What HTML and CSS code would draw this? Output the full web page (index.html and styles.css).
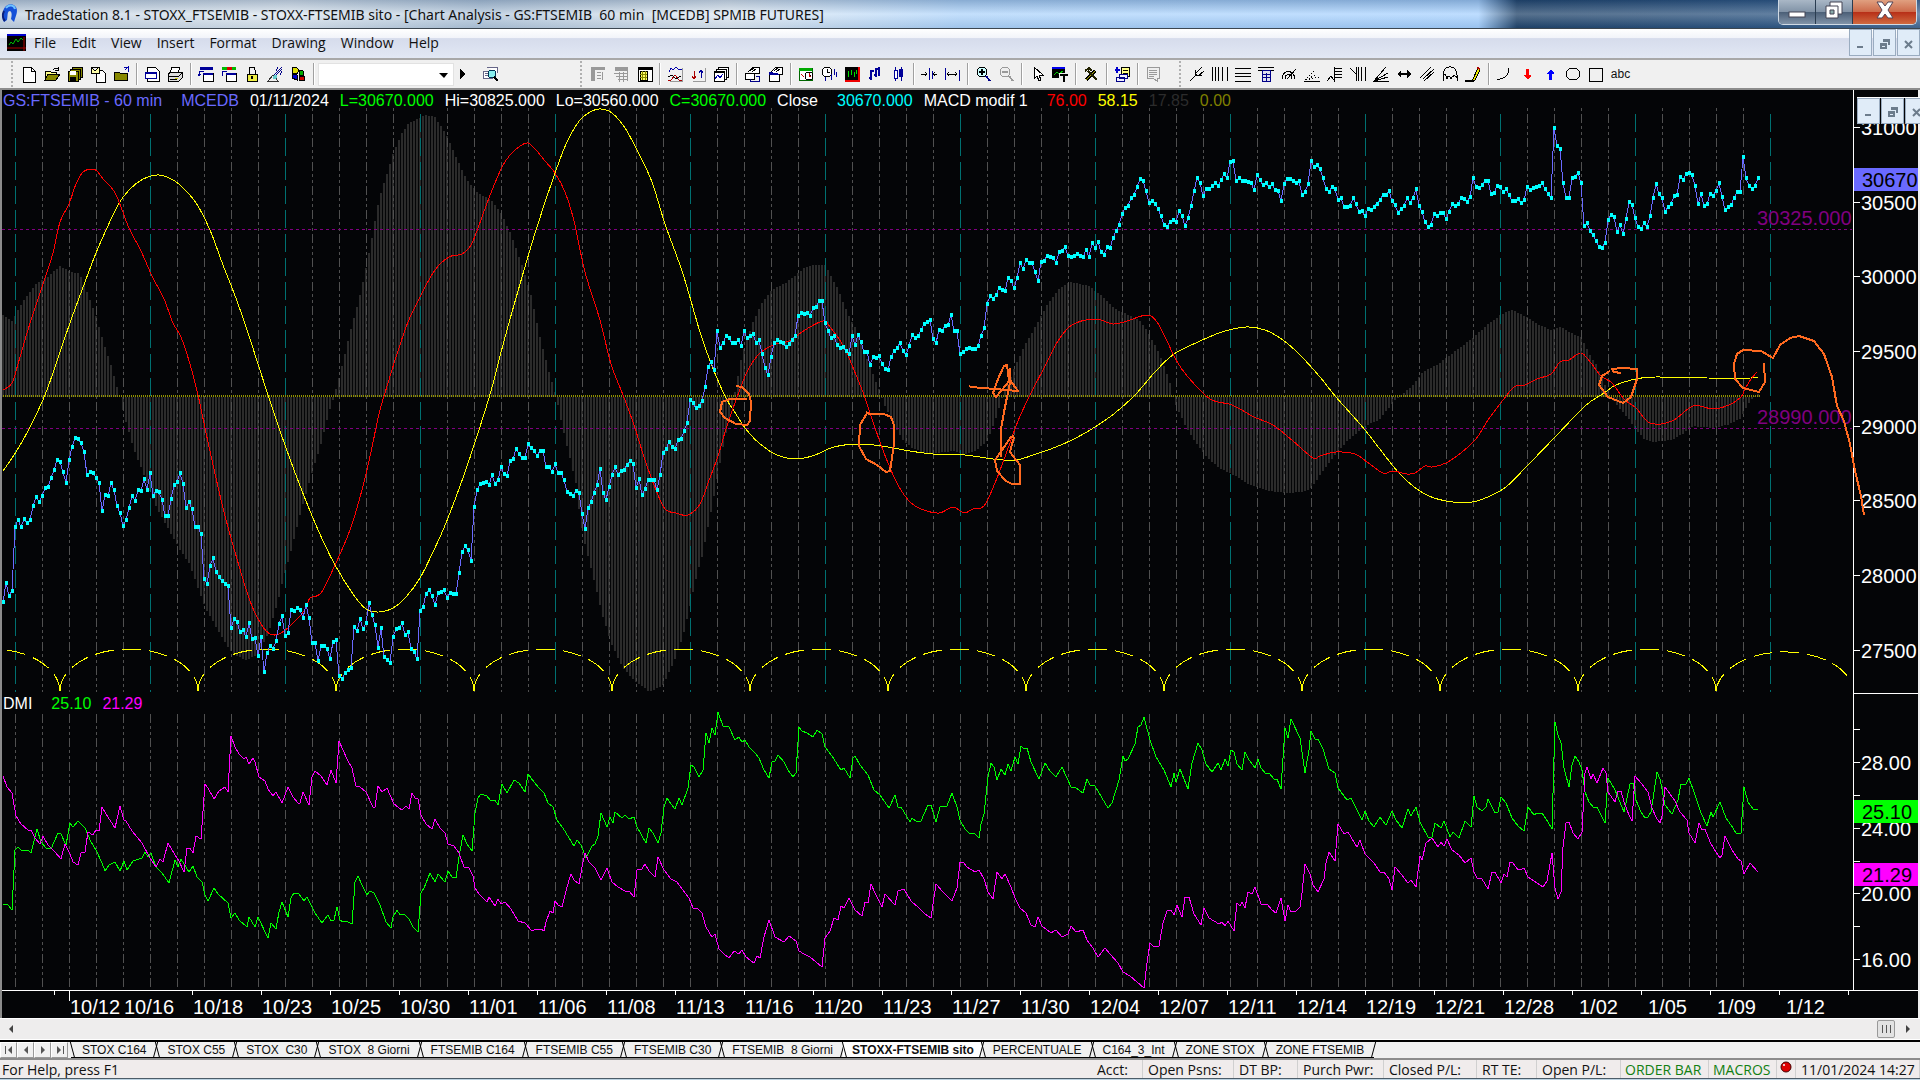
FILE: index.html
```html
<!DOCTYPE html>
<html lang="en">
<head>
    <meta charset="UTF-8">
    <meta name="viewport" content="width=device-width, initial-scale=1.0">
    <title>TradeStation 8.1 - STOXX_FTSEMIB</title>
    <link rel="stylesheet" href="styles.css">
</head>
<body>
<!-- Title bar -->
<header class="titlebar">
    <svg class="logo" width="20" height="24" viewBox="0 0 20 24"><path d="M3 10C4 3 11 0 15 4c4 4 1 9-1 16l-3-3c1-4 1-7-1-8-3 0-2 4-3 9l-3 2c-2-3-2-6-1-10z" fill="#1450d8"/><path d="M6 6c3-4 8-3 9 1" fill="none" stroke="#6fc3ff" stroke-width="2"/><path d="M4 9c-2 4-1 8 1 10" fill="none" stroke="#0a1f7a" stroke-width="2"/></svg>
    <h1>TradeStation 8.1 - STOXX_FTSEMIB - STOXX-FTSEMIB sito - [Chart Analysis - GS:FTSEMIB&nbsp; 60 min&nbsp; [MCEDB] SPMIB FUTURES]</h1>
    <div class="window-buttons">
        <button class="win" aria-label="Minimize"><svg width="20" height="20"><rect x="2" y="12" width="16" height="5" fill="#fff" stroke="#445" /></svg></button>
        <button class="win" aria-label="Restore"><svg width="22" height="20"><path d="M7 2h12v12H7z" fill="#fff" stroke="#445"/><path d="M3 6h12v12H3z" fill="#fff" stroke="#445"/><path d="M7 10h4v4H7z" fill="#8aa" stroke="#445"/></svg></button>
        <button class="win close" aria-label="Close"><svg width="22" height="20"><path d="M3 2h5l3 4 3-4h5l-5 8 5 8h-5l-3-4-3 4H3l5-8z" fill="#fff" stroke="#545"/></svg></button>
    </div>
</header>

<!-- Menu -->
<nav class="menubar">
    <svg class="chart-icon" width="19" height="17"><path d="M0 0h19v17H0z" fill="#000"/><path d="M0 0h19v2H0z" fill="#00c"/><path d="M2 11l2-3 2 2 3-5 2 3 3-4 2 2" stroke="#0b0" fill="none"/><path d="M0 14h19M17 3v14" stroke="#a00"/></svg>
    <button>File</button>
    <button>Edit</button>
    <button>View</button>
    <button>Insert</button>
    <button>Format</button>
    <button>Drawing</button>
    <button>Window</button>
    <button>Help</button>
    <div class="mdi-buttons">
        <button aria-label="Minimize chart"><svg width="12" height="12"><path d="M2 8h6v2H2z"/></svg></button>
        <button aria-label="Restore chart"><svg width="12" height="12"><path d="M4 1h7v6H9V4H4zM1 5h7v6H1zM3 8v1h3V8z" fill-rule="evenodd"/></svg></button>
        <button aria-label="Close chart"><svg width="12" height="12"><path d="M2 3l7 7M9 3l-7 7" class="cross"/></svg></button>
    </div>
</nav>

<!-- Toolbar -->
<div class="toolbar">
    <div class="group main">
        <button aria-label="New"><svg><path d="M2 1h8l4 4v11H2z" fill="#fff" stroke="#000"/><path d="M10 1v4h4" fill="none" stroke="#000"/></svg></button>
        <button aria-label="Open"><svg><path d="M1 14V5h5l1 1h5v3" fill="#ff8" stroke="#000"/><path d="M1 14l3-6h12l-4 6z" fill="#880" stroke="#000"/><path d="M9 4c2-3 4-2 5-1m0-2v3h-3" fill="none" stroke="#000"/></svg></button>
        <button aria-label="Save all"><svg><path d="M5 1h10v10H5z" fill="#880" stroke="#000"/><path d="M3 3h10v10H3z" fill="#880" stroke="#000"/><path d="M1 5h10v10H1z" fill="#880" stroke="#000"/><path d="M3 5h6v4H3z" fill="#fff"/><path d="M3 11h6v4H3z"/></svg></button>
        <button aria-label="Mail document"><svg><path d="M6 4h6l3 3v9H6z" fill="#fff" stroke="#000"/><path d="M1 1h8v6H1zl4 4 4-4" fill="#ffa" stroke="#000"/></svg></button>
        <button aria-label="Close folder"><svg><path d="M1 14V6h5l1 1h7v7z" fill="#880" stroke="#000"/><path d="M15 6V1l-3 3m3-3l-4 1" fill="none" stroke="#00a"/></svg></button>
        <i class="sep"></i>
        <button aria-label="Print preview"><svg><path d="M3 1h8l4 4v10H3z" fill="#fff" stroke="#000"/><path d="M1 6h11v6H1z" fill="#fff" stroke="#009"/><path d="M1 6h11v2H1z" fill="#009"/></svg></button>
        <button aria-label="Print"><svg><path d="M5 1h8l-2 6H3z" fill="#fff" stroke="#000"/><path d="M1 8l3-2h11v6l-3 3H1z" fill="#ddd" stroke="#000"/><path d="M1 10h11l3-3M3 13h7" fill="none" stroke="#000"/><path d="M8 12h3v1H8z" fill="#cc0"/></svg></button>
        <i class="sep"></i>
        <button aria-label="Insert symbol"><svg><path d="M2 1h13v3H2z" fill="#009"/><path d="M5 7h10v8H5z" fill="#fff" stroke="#000"/><path d="M5 7h10v2H5z" fill="#009"/><path d="M6 5H1v5m-1-2l1 2 2-2" fill="none" stroke="#009"/></svg></button>
        <button aria-label="Insert strategy"><svg><path d="M1 1h5v3H1z" fill="#0b0"/><path d="M6 1h5v3H6z" fill="#d00"/><path d="M11 1h4v3h-4z" fill="#0b0"/><path d="M5 7h10v8H5z" fill="#fff" stroke="#000"/><path d="M5 7h10v2H5z" fill="#009"/><path d="M6 5H1v5" fill="none" stroke="#009"/></svg></button>
        <button aria-label="Lock"><svg><path d="M5 8V4c0-4 6-4 6 0v4" fill="none" stroke="#000"/><path d="M3 8h10v7H3z" fill="#ee4" stroke="#000"/><path d="M7 10h2v3H7z"/></svg></button>
        <button aria-label="Satellite"><svg><path d="M1 15l5-6 5 6zM7 8l3 4" fill="#eee" stroke="#333"/><path d="M7 9l8-8M9 9l6-6M9 5l2-4M13 9l2-4" stroke="#008" fill="none"/><circle cx="8" cy="11" r="2" fill="#6cc"/></svg></button>
        <button aria-label="EasyLanguage"><svg><path d="M2 2l4-1 3 3-2 4-5-1z" fill="#dd0" stroke="#000"/><path d="M9 4l4 1 1 4-4 1z" fill="#0a0" stroke="#000"/><path d="M2 8l5 1v5l-5-2z" fill="#00c" stroke="#000"/><path d="M9 10l6 1-1 4-5-1z" fill="#c00" stroke="#000"/></svg></button>
        <i class="sep"></i>
        <label class="symbol">
            <select aria-label="Symbol"><option></option></select>
            <svg class="drop"><path d="M1 1h9l-4 5z"/></svg>
        </label>
        <button class="go" aria-label="Go"><svg><path d="M6 3v10l5-5z"/></svg></button>
        <button class="lookup" aria-label="Symbol lookup"><svg><path d="M1 5h9v7H1zM5 1h10v6" fill="#fff" stroke="#668"/><path d="M3 7h4M3 9h4" stroke="#668"/><circle cx="10" cy="8" r="4" fill="#8ee" stroke="#035"/><path d="M12 11l4 4" stroke="#000" stroke-width="2"/></svg></button>
    </div>
    <div class="group">
        <button aria-label="Account" disabled><svg><path d="M1 1h14v3H1zM1 4h4v11H1z" fill="#999"/><path d="M7 6h4M7 9h4M7 12h4M12 6v8" stroke="#999"/></svg></button>
        <button aria-label="Positions" disabled><svg><path d="M2 1h13v4H2z" fill="#999"/><path d="M1 7h14M3 10h12M5 13h10M6 6v10M10 6v10M14 5v10" stroke="#999"/></svg></button>
        <button aria-label="Data window"><svg><path d="M2 1h14v14H2z" fill="#fff" stroke="#000"/><path d="M2 1h14v3H2z" fill="#000"/><path d="M4 5h7v9H4z" fill="#ff6" stroke="#000"/><path d="M6 5v9M9 5v9M4 8h7M4 11h7" stroke="#880"/></svg></button>
        <i class="sep"></i>
        <button aria-label="Indicator"><svg><path d="M2 6l2-4 2 2 3-3 3 3 3-1" fill="none" stroke="#00a"/><path d="M1 14h3l4-5 4 5h3" fill="none" stroke="#a00"/><path d="M1 11l4-2 4 4 5-3" fill="none" stroke="#000"/><path d="M15 2v13H3" fill="none" stroke="#999"/></svg></button>
        <button aria-label="Strategy"><svg><path d="M4 5v8m-2-3l2 3 2-3" fill="none" stroke="#a00"/><path d="M11 12V4m-2 3l2-3 2 3" fill="none" stroke="#009"/><path d="M15 2v13H3" fill="none" stroke="#999"/></svg></button>
        <button aria-label="Analysis windows"><svg><path d="M5 1h10v10H5z" fill="#fff" stroke="#000"/><path d="M3 3h10v10H3z" fill="#fff" stroke="#000"/><path d="M1 5h10v10H1z" fill="#fff" stroke="#000"/><path d="M1 5h10v2H1z"/><path d="M2 13l3-4 2 3 3-4" fill="none" stroke="#00a"/></svg></button>
        <i class="sep"></i>
        <button aria-label="Format symbol"><svg><path d="M4 6l5-5h6v6h-4" fill="#fff" stroke="#000"/><path d="M6 5l4-3M8 6l4-3" stroke="#000"/><path d="M1 7h9v6H1z" fill="#fff" stroke="#000"/><path d="M12 10h3v5H6v-2" fill="none" stroke="#008"/></svg></button>
        <button aria-label="Format window"><svg><path d="M2 6h10v9H2z" fill="#fff" stroke="#000"/><path d="M2 6h10v3H2z" fill="#009"/><path d="M4 6l5-5h6v7h-2" fill="#fff" stroke="#000"/><path d="M7 5l4-3M9 6l4-3" stroke="#000"/></svg></button>
        <i class="sep"></i>
        <button aria-label="Sessions"><svg><path d="M1 2h13v12H1z" fill="#fff" stroke="#060"/><path d="M1 2h13v3H1z" fill="#0a0"/><circle cx="11" cy="10" r="4" fill="#fff" stroke="#000"/><path d="M3 8l3 3M11 7v3h2" stroke="#c00"/></svg></button>
        <button aria-label="Interval"><svg><circle cx="6" cy="6" r="5" fill="#fff" stroke="#000"/><path d="M6 3v3h3" fill="none" stroke="#000"/><path d="M4 11v4M10 8v6M13 3v6M15 6v5" stroke="#009"/></svg></button>
        <button aria-label="Chart window"><svg><path d="M1 1h15v14H1z"/><path d="M15 1v14H1" stroke="#e00" stroke-width="2" fill="none"/><path d="M4 5v6M7 4v5M10 6v5M12 4v4" stroke="#0d0"/></svg></button>
        <button aria-label="Bar chart"><svg><path d="M4 4v10M2 12h2M4 5h3M9 2v9M7 9h2M9 3h3M12 1v9" stroke="#009" stroke-width="2" fill="none"/></svg></button>
        <button aria-label="Candlestick"><svg><path d="M5 1v14M11 1v14" stroke="#009"/><path d="M4 4h3v8H4z" fill="#fff" stroke="#009"/><path d="M9 3h4v8H9z" fill="#009"/></svg></button>
        <i class="sep"></i>
        <button aria-label="Decrease spacing"><svg><path d="M8 2v12M11 5v8" stroke="#009"/><path d="M0 8h6m-2-2l2 2-2 2M16 8h-4m2-2l-2 2 2 2" fill="none" stroke="#000"/></svg></button>
        <button aria-label="Increase spacing"><svg><path d="M1 2v12M15 4v11" stroke="#009"/><path d="M3 8h10M5 6L3 8l2 2M11 6l2 2-2 2" fill="none" stroke="#000"/></svg></button>
        <i class="sep"></i>
        <button aria-label="Zoom in"><svg><circle cx="7" cy="6" r="5" fill="#cff" stroke="#000"/><path d="M7 3v6M4 6h6" stroke="#000" stroke-width="2"/><path d="M11 10l4 5" stroke="#008" stroke-width="2"/></svg></button>
        <button aria-label="Zoom out" disabled><svg><circle cx="7" cy="6" r="5" fill="#eee" stroke="#999"/><path d="M4 6h6M11 10l4 5" stroke="#999" stroke-width="2"/></svg></button>
        <i class="sep"></i>
        <button aria-label="Pointer"><svg><path d="M5 1v12l3-3 2 5 2-1-2-5h4z" fill="#fff" stroke="#000"/></svg></button>
        <button aria-label="Data tip"><svg><path d="M0 1h13v11H0z"/><path d="M0 1h13v2H0z" fill="#00e"/><path d="M2 9l3-3 2 2 4-3" stroke="#0c0" fill="none"/><path d="M7 7h10v10H7z" fill="#f0f0f0"/><path d="M8 9h8M12 9v7" stroke="#000" stroke-width="2"/></svg></button>
        <i class="sep"></i>
        <button aria-label="Tools"><svg><path d="M3 14L12 5" stroke="#000" stroke-width="3"/><path d="M3 14L12 5" stroke="#aa0"/><path d="M2 5l4-3 3 3M5 5l9 9" stroke="#220" stroke-width="2" fill="none"/></svg></button>
        <i class="sep"></i>
        <button aria-label="Add sheet"><svg><path d="M7 1h8v9H7z" fill="#ff8" stroke="#000"/><path d="M9 4h5M9 7h5" stroke="#000"/><path d="M1 4h5M3 1v6" stroke="#00c" stroke-width="2"/><path d="M5 8h8v4H5zM2 11h8v4H2z" fill="#eef" stroke="#008"/></svg></button>
        <i class="sep"></i>
        <button aria-label="Notes" disabled><svg><path d="M2 1h12v11h-2v3l-4-3H2z" fill="#eee" stroke="#999"/><path d="M4 4h8M4 6h8M4 8h8M4 10h5" stroke="#999"/></svg></button>
    </div>
    <div class="group drawing">
        <button aria-label="Andrews pitchfork"><svg><path d="M1 15L8 8M7 4l-1 4 3 2 4-1M6 8l7-7M9 10l6-5" fill="none" stroke="#000"/></svg></button>
        <button aria-label="Fibonacci time"><svg><path d="M0 1v14M3 1v14M6 1v14M10 1v14M15 1v14" stroke="#000"/></svg></button>
        <button aria-label="Horizontal lines"><svg><path d="M0 2h16M0 7h16M0 10h16M0 15h16" stroke="#000"/></svg></button>
        <button aria-label="Price retracement"><svg><path d="M0 1h16M0 4h16" stroke="#000"/><path d="M4 4h8v11H4z" fill="#dde" stroke="#008"/><path d="M4 8h8M4 11h8M8 7v8" stroke="#008"/></svg></button>
        <button aria-label="Speed arcs"><svg><path d="M1 13c0-10 12-10 13 0M4 13c0-6 7-6 7 0M6 13l9-10" fill="none" stroke="#000"/></svg></button>
        <button aria-label="Speed fan"><svg><path d="M0 15h16" stroke="#000"/><path d="M1 14L14 1M2 14L15 7M2 14l13-3" stroke="#000" stroke-dasharray="1 2"/></svg></button>
        <button aria-label="Price extension"><svg><path d="M0 15l4-5 3 4V1M8 2h7M8 5h7M8 8h7M8 11h7" fill="none" stroke="#000"/></svg></button>
        <button aria-label="Time extension"><svg><path d="M0 2l6 6V1M8 1v14M11 1v14M15 1v14M6 8v7" fill="none" stroke="#000"/></svg></button>
        <button aria-label="Gann fan"><svg><path d="M0 15h16M1 15L13 1M1 15L15 7M1 15l14-4" stroke="#000"/></svg></button>
        <button aria-label="Time line"><svg><path d="M2 8h12" stroke="#000" stroke-width="2"/><path d="M5 4v8L1 8zM11 4v8l4-4z"/></svg></button>
        <button aria-label="Regression channel"><svg><path d="M1 12L12 1M4 13L15 3M5 15L15 6" stroke="#000"/></svg></button>
        <button aria-label="Cycle lines"><svg><path d="M1 15V9c0-11 14-11 14 0v6M1 10c2-3 4 0 4 3 0-4 3-4 4 0 1-4 5-4 6-1" fill="none" stroke="#000"/></svg></button>
        <button aria-label="Trend line"><svg><path d="M0 15h9" stroke="#000" stroke-width="2"/><path d="M8 13l5-11 2 2-5 10-3 1z" fill="#ee0" stroke="#000"/><path d="M12 1l3 1v2l-3-1z" fill="#a00"/></svg></button>
        <i class="sep"></i>
        <button aria-label="Arc"><svg><path d="M1 13c7 1 12-4 12-11" fill="none" stroke="#000"/></svg></button>
        <button aria-label="Down arrow"><svg><path d="M7 3h3v6h2v1l-3 4-4-4V9h2z" fill="#f00"/></svg></button>
        <button aria-label="Up arrow"><svg><path d="M7 14h3V8h2V7L9 3 5 7v1h2z" fill="#00f"/></svg></button>
        <button aria-label="Ellipse"><svg><ellipse cx="8" cy="8" rx="7" ry="6" fill="none" stroke="#000"/></svg></button>
        <button aria-label="Rectangle"><svg><path d="M1 2h13v13H1z" fill="none" stroke="#000"/></svg></button>
        <button class="abc">abc</button>
    </div>
</div>

<!-- Chart -->
<main class="chart">
    <div class="plot-area">
        <svg id="plot" class="plot" viewBox="2 90 1851 900" preserveAspectRatio="xMinYMin meet"></svg>
        <p class="legend">
            <span class="violet wide">GS:FTSEMIB - 60 min</span>
            <span class="violet">MCEDB</span>
            <span>01/11/2024</span>
            <span class="green">L=30670.000</span>
            <span>Hi=30825.000</span>
            <span>Lo=30560.000</span>
            <span class="green">C=30670.000</span>
            <span class="wide">Close</span>
            <span class="cyan">30670.000</span>
            <span class="wide">MACD modif 1</span>
            <span class="red">76.00</span>
            <span class="yellow">58.15</span>
            <span class="dark">17.85</span>
            <span class="olive">0.00</span>
        </p>
        <p class="legend dmi">
            <span class="wide">DMI</span>
            <span class="green">25.10</span>
            <span class="magenta">21.29</span>
        </p>
    </div>
    <div class="price-axis">
        <svg id="axis" viewBox="1853 90 65 900" preserveAspectRatio="xMinYMin meet"></svg>
        <div class="mdi-buttons floating">
            <button aria-label="Minimize"><svg width="12" height="12"><path d="M2 8h6v2H2z"/></svg></button>
            <button aria-label="Restore"><svg width="12" height="12"><path d="M4 1h7v6H9V4H4zM1 5h7v6H1zM3 8v1h3V8z" fill-rule="evenodd"/></svg></button>
            <button aria-label="Close"><svg width="12" height="12"><path d="M2 3l7 7M9 3l-7 7" class="cross"/></svg></button>
        </div>
    </div>
    <svg id="time" class="time-axis" viewBox="2 990 1916 28" preserveAspectRatio="xMinYMin meet"></svg>
</main>

<!-- Horizontal scrollbar -->
<div class="scrollbar">
    <button aria-label="Scroll left"><svg width="8" height="10"><path d="M5 1v8L1 5z"/></svg></button>
    <span class="track"></span>
    <span class="thumb"></span>
    <button aria-label="Scroll right"><svg width="8" height="10"><path d="M2 1v8l4-4z"/></svg></button>
</div>

<!-- Workspace tabs -->
<nav class="tabs">
    <div class="tab-arrows">
        <button aria-label="First"><svg width="10" height="8"><path d="M1 0h1v8H1zM8 0v8L4 4z"/></svg></button>
        <button aria-label="Previous"><svg width="10" height="8"><path d="M7 0v8L3 4z"/></svg></button>
        <button aria-label="Next"><svg width="10" height="8"><path d="M3 0v8l4-4z"/></svg></button>
        <button aria-label="Last"><svg width="10" height="8"><path d="M8 0h1v8H8zM2 0v8l4-4z"/></svg></button>
    </div>
    <button class="tab">STOX C164</button>
    <button class="tab">STOX C55</button>
    <button class="tab">STOX&nbsp; C30</button>
    <button class="tab">STOX&nbsp; 8 Giorni</button>
    <button class="tab">FTSEMIB C164</button>
    <button class="tab">FTSEMIB C55</button>
    <button class="tab">FTSEMIB C30</button>
    <button class="tab">FTSEMIB&nbsp; 8 Giorni</button>
    <button class="tab active">STOXX-FTSEMIB sito</button>
    <button class="tab">PERCENTUALE</button>
    <button class="tab">C164_3_Int</button>
    <button class="tab">ZONE STOX</button>
    <button class="tab">ZONE FTSEMIB</button>
</nav>

<!-- Status bar -->
<footer class="statusbar">
    <span class="help">For Help, press F1</span>
    <span>Acct:</span>
    <span>Open Psns:</span>
    <span>DT BP:</span>
    <span>Purch Pwr:</span>
    <span>Closed P/L:</span>
    <span>RT TE:</span>
    <span>Open P/L:</span>
    <span class="on">ORDER BAR</span>
    <span class="on">MACROS</span>
    <span class="ball"><svg width="14" height="14"><circle cx="7" cy="7" r="5" fill="#d00" stroke="#400"/><circle cx="5" cy="5" r="1" fill="#fff"/></svg></span>
    <span>11/01/2024 14:27</span>
</footer>
<div class="taskbar"></div>

<script src="chart.js"></script>
</body>
</html>
```

FILE: styles.css
```css
* {
    box-sizing: border-box;
}
body {
    margin: 0;
    height: 100vh;
    display: flex;
    flex-direction: column;
    overflow: hidden;
    background-color: #f0f0f0;
    color: #111;
    font-family: "Open Sans", "Noto Sans", sans-serif;
    font-size: 14px;
}
button {
    border: none;
    padding: 0;
    background: none;
    font: inherit;
    color: inherit;
}

/* Title bar */
.titlebar {
    height: 29px;
    display: flex;
    align-items: center;
    background:
        linear-gradient(rgba(20, 50, 90, 0.25), rgba(255, 255, 255, 0.25) 50%, rgba(20, 50, 90, 0.1)),
        linear-gradient(90deg, #c4d3e2, #dde7f0 15%, #b4c8dc 25%, #dfe9f2 38%, #b0d5fb 50%, #a8d2ff 77%, #1f4268 79%, #2c5480 92%, #456a94);
    border-bottom: 1px solid #3c4650;
}
.logo {
    flex: none;
    margin: 0 5px 0 0;
}
.titlebar h1 {
    flex: 1;
    margin: 0;
    font-family: "Noto Sans", sans-serif;
    font-size: 14px;
    font-weight: normal;
    white-space: nowrap;
}
.window-buttons {
    display: flex;
    align-self: flex-start;
    height: 25px;
    margin-right: 3px;
    border: 1px solid #d0dae4;
    border-top: none;
    border-radius: 0 0 5px 5px;
    overflow: hidden;
}
.win {
    width: 37px;
    border-right: 1px solid #2a3c50;
    background: linear-gradient(#a9b7c6, #8092a6 50%, #4c6078 52%, #8193a8);
}
.win.close {
    width: 63px;
    border-right: none;
    background: linear-gradient(#e0a080, #cc6a4a 50%, #b83018 52%, #d06a40);
}

/* Menu bar */
.menubar {
    height: 31px;
    display: flex;
    align-items: center;
    gap: 15px;
    padding: 0 0 2px 7px;
    background: linear-gradient(#ffffff, #f2f4fa 30%, #d6dcec 33%, #e2e8f4);
    border-bottom: 2px solid #a8a8a8;
}
.chart-icon {
    margin-right: -7px;
}
.mdi-buttons {
    display: flex;
    gap: 1px;
    height: 27px;
    margin-left: auto;
}
.mdi-buttons button {
    width: 23px;
    flex: none;
    background-color: #e0ecf8;
    border: 1px solid #9aacc0;
}
.mdi-buttons svg {
    fill: #6c7c8c;
    vertical-align: middle;
}
.mdi-buttons .cross {
    stroke: #6c7c8c;
    stroke-width: 2;
}

/* Toolbar */
.toolbar {
    height: 30px;
    display: flex;
    align-items: center;
    padding-left: 11px;
    background-color: #f0f0f0;
    border-bottom: 2px solid #8c8c8c;
}
.group {
    display: flex;
    align-items: center;
    height: 26px;
    padding-left: 5px;
    border-left: 2px dotted #b0b0b0;
}
.group.main {
    width: 569px;
    flex: none;
}
.group:nth-child(2) {
    width: 599px;
    flex: none;
}
.group button {
    width: 23px;
    height: 22px;
    flex: none;
    display: flex;
    align-items: center;
    justify-content: center;
}
.group button svg {
    width: 17px;
    height: 17px;
    shape-rendering: crispEdges;
}
.sep {
    width: 2px;
    height: 22px;
    margin: 0 3px;
    flex: none;
    background-color: #a0a0a0;
    border-right: 1px solid #fff;
}
.symbol {
    position: relative;
    display: flex;
}
.symbol select {
    appearance: none;
    width: 136px;
    height: 23px;
    background-color: #fff;
    border: 1px solid #e2e2e2;
}
.drop {
    position: absolute;
    right: 4px;
    top: 9px;
    width: 12px;
    height: 8px;
}
.group .go {
    width: 16px;
}
.group .lookup {
    margin-left: 9px;
}
.group .abc {
    width: 25px;
    font-size: 12px;
    font-family: "Liberation Sans", Arial, sans-serif;
}

/* Chart */
.chart {
    flex: 1;
    min-height: 0;
    display: grid;
    grid-template-columns: minmax(0, 1fr) 65px;
    grid-template-rows: minmax(0, 1fr) 28px;
    margin-right: 2px;
    border-left: 2px solid #8c8c8c;
    background-color: #040507;
    font-family: "Liberation Sans", Arial, sans-serif;
}
.plot-area {
    position: relative;
    z-index: 1;
}
.chart svg {
    display: block;
    width: 100%;
    height: 100%;
}
.plot {
    overflow: visible;
}
.price-axis {
    position: relative;
}
.price-axis .floating {
    position: absolute;
    left: 4px;
    top: 7px;
    width: 63px;
    height: 27px;
    overflow: hidden;
    border-top: 1px solid #fff;
}
.mdi-buttons.floating svg {
    display: inline-block;
    width: 12px;
    height: 12px;
}
.time-axis {
    grid-column: 1 / -1;
}
.chart text {
    font-size: 20px;
    fill: #fff;
}
.chart text.level {
    fill: #800080;
}
.chart text.badge {
    fill: #000;
}
.legend {
    position: absolute;
    left: 1px;
    top: 1px;
    margin: 0;
    display: flex;
    gap: 11px;
    font-size: 16px;
    line-height: 20px;
    white-space: nowrap;
    color: #fff;
}
.legend.dmi {
    top: 604px;
}
.wide {
    margin-right: 8px;
}
.violet { color: #6a6aff; }
.green { color: #00ff00; }
.cyan { color: #00ffff; }
.red { color: #ff0000; }
.yellow { color: #ffff00; }
.dark { color: #2c2c2c; }
.olive { color: #808000; }
.magenta { color: #ff00ff; }

.line {
    fill: none;
    stroke-width: 1;
    shape-rendering: crispEdges;
}
.grid-day { stroke: #505050; stroke-dasharray: 9 3 3 3 3 3; }
.grid-week { stroke: #007070; stroke-dasharray: 18 6; }
.histogram { stroke: #2b2b2b; stroke-width: 2; }
.zero { stroke: #909000; stroke-width: 2; stroke-dasharray: 1 1; }
.level-line { stroke: #800080; stroke-dasharray: 3 3; }
.cycle { stroke: #ffff00; stroke-dasharray: 19 8; }
.price { stroke: #6a6aff; }
.dots { fill: #00ffff; shape-rendering: crispEdges; }
.macd { stroke: #ff0000; }
.signal { stroke: #ffff00; }
.plus { stroke: #00ff00; }
.minus { stroke: #ff00ff; }
.axis { stroke: #ffffff; }
.pen { stroke: #ff6a20; stroke-width: 2; stroke-linejoin: round; }

/* Scrollbar */
.scrollbar {
    height: 22px;
    display: flex;
    align-items: center;
    padding: 0 8px;
    background-color: #eeeded;
    border-top: 1px solid #fff;
    border-bottom: 1px solid #fff;
}
.scrollbar svg {
    display: block;
    fill: #444;
}
.scrollbar .track {
    flex: 1;
}
.scrollbar .thumb {
    width: 18px;
    height: 18px;
    margin-right: 9px;
    border: 1px solid #999;
    border-radius: 2px;
    background: repeating-linear-gradient(90deg, #555 0, #555 1px, transparent 1px, transparent 4px) 4px 4px / 9px 8px no-repeat, #e2e2e2;
}

/* Tabs */
.tabs {
    height: 20px;
    display: flex;
    border-top: 2px solid #000;
    border-bottom: 2px solid #8c8c8c;
    background-color: #f0f0f0;
    font-family: "Liberation Sans", Arial, sans-serif;
    font-size: 12px;
}
.tab-arrows {
    display: flex;
    width: 71px;
    flex: none;
}
.tab-arrows button {
    width: 17px;
    border: 1px solid #999;
    border-top-color: #fff;
    border-left-color: #fff;
}
.tab-arrows svg {
    display: block;
    margin: auto;
    fill: #555;
}
.tab {
    position: relative;
    height: 16px;
    padding: 0 10px 0 11px;
    white-space: nowrap;
    border-bottom: 1px solid #000;
}
.tab::before,
.tab::after {
    content: "";
    position: absolute;
    top: 0;
    height: 16px;
    border-left: 1px solid #000;
}
.tab::before {
    left: 1px;
    transform: skewX(15deg);
}
.tab::after {
    right: 0;
    transform: skewX(-15deg);
}
.tab.active {
    padding: 0 8px 0 9px;
    background-color: #fff;
    font-weight: bold;
}

/* Status bar */
.statusbar {
    height: 18px;
    display: grid;
    grid-template-columns: 1fr 51px 91px 64px 86px 93px 60px 84px 88px 68px 19px 124px;
    background-color: #f0ecec;
    line-height: 20px;
    white-space: nowrap;
}
.statusbar span {
    height: 18px;
    padding-left: 5px;
    border-right: 1px solid #d0d0d0;
}
.statusbar .help {
    padding-left: 2px;
    border-right: none;
}
.statusbar .on {
    padding-left: 4px;
    color: #128012;
}
.statusbar .ball {
    padding-left: 2px;
}
.statusbar .ball svg {
    display: block;
}
.taskbar {
    height: 2px;
    background-color: #bcd3e2;
    border-top: 1px solid #4c5c68;
}
```

FILE: chart.js
```js
const NS = 'http://www.w3.org/2000/svg';
const plot = document.getElementById('plot');
const axis = document.getElementById('axis');
const time = document.getElementById('time');

const BAR = 3;          // distance between bars
const DAY = 9 * BAR;    // 9 hourly bars per session
const ZERO = 397;       // MACD zero line

function draw(parent, tag, attrs, text) {
    const el = document.createElementNS(NS, tag);
    for (const name in attrs) {
        el.setAttribute(name, attrs[name]);
    }
    if (text) {
        el.textContent = text;
    }
    parent.appendChild(el);
}

function points(str) {
    return str.trim().split(/\s+/).map((p) => p.split(',').map(Number));
}

// Linear value of a series at x
function valueAt(pts, x) {
    let i = 1;
    while (i < pts.length - 1 && pts[i][0] < x) i++;
    const [x0, y0] = pts[i - 1];
    const [x1, y1] = pts[i];
    return y0 + (y1 - y0) * (x - x0) / (x1 - x0);
}

// Curve through all the points
function smooth(pts) {
    let d = 'M' + pts[0];
    for (let i = 0; i < pts.length - 1; i++) {
        const a = pts[i - 1] || pts[i];
        const b = pts[i];
        const c = pts[i + 1];
        const e = pts[i + 2] || c;
        d += `C${b[0] + (c[0] - a[0]) / 6},${b[1] + (c[1] - a[1]) / 6} ${c[0] - (e[0] - b[0]) / 6},${c[1] - (e[1] - b[1]) / 6} ${c}`;
    }
    return d;
}

const histogram = points(`
3,315 12,321 22,303 36,284 49,276 60,266 69,271 80,274 89,297 96,316 103,341 112,368 118,391 120,397
125,418 134,450 145,477 154,502 165,523 179,548 190,565 196,582 205,607 219,632 232,653 246,660 257,655
268,634 277,605 283,580 290,555 301,511 312,473 321,444 328,416 335,393 342,366 350,333 357,307 364,278
371,243 379,199 386,177 393,154 402,133 408,124 417,119 426,115 435,117 446,134 455,155 467,180 478,193
491,200 500,211 511,234 522,265 531,295 540,337 549,372 556,395 562,425 569,454 576,483 580,517 585,544
594,580 603,617 612,645 623,668 636,682 650,692 663,685 674,662 683,636 692,597 697,574 702,557 705,542
708,527 714,496 718,473 724,442 730,416 736,387 740,364 745,345 753,322 763,301 773,289 787,282 797,274
805,267 815,265 825,265 830,274 838,289 848,314 858,333 864,351 872,372 880,391 884,404 892,420 902,439
912,448 927,454 953,451 965,454 977,450 987,441 995,421 1002,398 1010,379 1016,364 1026,343 1038,322
1048,303 1060,288 1070,282 1089,286 1101,295 1115,309 1127,314 1139,320 1147,330 1159,353 1169,379
1174,400 1184,423 1192,437 1206,456 1218,467 1234,475 1250,485 1265,490 1285,493 1304,492 1312,487
1324,469 1336,454 1347,441 1359,431 1367,425 1379,420 1387,410 1395,400 1401,395 1411,387 1423,372
1438,364 1458,349 1474,337 1488,324 1502,314 1512,310 1525,316 1537,324 1551,330 1561,327 1573,334
1581,337 1589,353 1597,366 1604,383 1610,395 1616,404 1628,418 1636,429 1644,439 1652,442 1672,440
1684,433 1693,426 1713,428 1727,425 1741,418 1747,406 1753,397 1759,393`);

const signal = points(`
3,471 16,452 29,429 45,395 58,358 71,320 85,282 96,253 107,228 118,205 129,190 143,179 157,175 167,177
179,184 196,203 210,230 223,265 237,301 250,339 268,395 286,448 304,496 319,532 335,565 353,594 366,609
379,612 393,608 406,597 420,578 433,552 446,523 464,475 478,433 491,391 504,341 518,291 536,230 555,173
567,142 580,120 592,111 601,109 612,113 625,128 638,152 652,182 665,224 683,274 700,332 712,366 726,398
736,414 745,428 759,443 777,455 797,459 815,455 834,447 858,444 882,446 910,451 933,454 965,455 993,459
1016,460 1036,454 1056,447 1076,438 1095,427 1115,413 1135,395 1155,372 1174,354 1198,342 1222,332
1246,327 1265,330 1283,340 1301,356 1320,377 1336,397 1365,430 1399,473 1423,493 1446,501 1472,502
1490,496 1506,487 1529,464 1557,435 1585,406 1604,393 1616,385 1636,379 1656,377 1707,378 1751,378 1758,377`);

const macd = points(`
3,390 12,383 18,364 27,333 36,305 45,278 53,253 60,222 69,204 76,184 83,172 92,169 97,171 104,180 114,191
121,207 129,228 141,251 152,276 164,299 173,323 181,337 190,364 198,395 208,442 223,508 237,559 250,601
261,624 270,634 279,634 290,626 304,611 310,598 321,593 335,565 350,530 362,490 371,452 379,414 388,383
397,354 408,322 422,293 435,270 449,257 462,254 471,245 478,228 489,198 502,167 511,154 520,146 528,143
536,150 545,161 555,173 565,192 574,221 585,272 600,320 611,364 623,395 634,425 645,460 656,490 665,509
676,513 688,515 700,504 708,483 718,456 726,429 736,400 747,372 759,354 773,345 789,341 805,330 823,321
830,327 844,347 854,370 864,395 874,425 886,458 898,485 910,502 921,509 939,513 953,507 964,513 973,509
984,506 995,483 1006,454 1018,421 1030,395 1044,368 1058,341 1072,325 1095,319 1113,324 1127,321 1147,315
1157,322 1167,341 1176,360 1188,377 1210,399 1232,405 1254,417 1273,425 1293,441 1313,458 1320,456
1336,452 1355,454 1367,462 1383,473 1393,471 1407,474 1415,473 1425,466 1432,467 1446,463 1462,452
1476,439 1488,420 1500,404 1514,387 1525,385 1537,379 1551,374 1560,362 1569,360 1581,353 1591,363
1601,376 1612,383 1624,399 1636,408 1650,423 1672,421 1693,406 1713,409 1729,405 1741,397 1745,389
1751,379 1757,372`);

const price = points(`
3,602 6,583 9,596 12,591 15,527 18,520 21,527 24,519 27,523 30,520 33,506 36,497 39,502 42,496 45,488 48,487
51,478 54,470 57,460 60,462 63,472 66,483 69,460 72,447 75,438 78,439 81,443 84,452 87,475 90,472 93,473
96,478 99,483 102,511 105,495 108,496 111,483 114,490 117,506 120,513 123,526 126,520 129,508 132,496
135,501 138,490 141,491 144,479 147,490 150,473 153,496 156,491 159,492 162,500 165,516 168,516 171,499
174,485 177,482 180,473 183,484 186,508 189,502 192,509 195,527 198,527 201,534 204,579 207,584 210,566
213,558 216,572 219,577 222,581 228,586 231,628 234,619 237,622 240,632 243,630 246,637 249,623 252,639
255,638 258,656 261,637 264,672 267,653 270,646 273,649 276,641 279,624 282,616 285,636 288,633 291,610
294,611 297,608 300,610 303,618 306,605 309,618 312,643 315,643 318,661 321,646 324,646 327,649 330,659
333,642 336,640 339,676 342,679 345,673 348,670 351,668 354,627 357,631 360,619 363,629 366,623 369,603
372,615 375,625 378,648 381,628 384,657 387,660 390,663 393,637 396,629 399,628 402,623 405,635 408,632
411,649 414,652 417,659 420,611 423,607 426,594 429,590 432,596 435,605 438,593 444,590 447,598 450,593
456,594 459,573 462,552 465,546 468,550 471,561 474,507 477,490 480,484 486,482 489,485 492,475 495,484
498,480 501,467 504,474 507,476 510,461 513,459 516,449 522,458 525,458 528,444 531,448 534,451 537,456
540,451 543,451 546,467 549,467 552,472 555,464 558,473 561,473 564,480 567,492 573,496 576,491 579,493
582,514 585,529 588,508 591,502 594,493 597,485 600,469 603,493 606,500 609,487 612,475 615,467 618,475
621,471 624,470 627,465 630,461 633,464 636,488 639,479 642,495 645,489 648,480 654,480 657,490 660,475
663,453 666,449 669,442 672,447 675,449 678,440 681,439 684,431 687,423 690,400 693,403 696,408 699,406
702,401 705,387 708,367 711,362 714,370 717,331 720,348 723,343 726,336 729,338 732,343 735,343 738,340
741,346 744,331 747,338 750,336 753,334 756,343 759,340 762,354 765,368 768,375 771,357 774,343 777,340
780,342 783,343 786,347 789,344 792,340 795,336 798,316 801,313 804,314 807,313 810,316 813,308 816,307
819,301 822,301 825,323 828,331 831,338 834,336 837,345 840,348 843,347 846,351 849,354 852,336 855,345
858,335 861,342 864,352 867,352 870,365 873,357 876,358 879,356 882,364 885,369 888,370 891,357 894,351
897,348 900,343 903,351 906,355 909,346 912,335 915,338 918,336 921,330 924,324 927,322 930,320 933,339
936,343 939,330 942,331 945,326 948,325 951,315 954,331 957,331 960,354 963,352 966,349 969,348 972,349
975,349 978,346 981,336 984,328 987,304 990,296 993,299 996,295 999,288 1005,291 1008,278 1011,281
1014,288 1017,278 1020,263 1023,269 1026,260 1029,263 1032,263 1035,272 1038,281 1041,262 1044,261
1047,256 1053,258 1056,263 1059,252 1062,251 1065,247 1068,256 1071,257 1077,254 1083,257 1086,250
1089,257 1092,243 1095,248 1098,242 1101,252 1104,255 1107,247 1110,248 1113,238 1116,231 1119,225
1122,214 1125,208 1128,206 1131,198 1134,195 1137,187 1140,179 1143,181 1146,191 1149,203 1152,201
1155,204 1158,209 1161,216 1164,225 1167,227 1170,222 1173,220 1176,222 1179,211 1182,216 1185,226
1188,218 1191,206 1194,191 1197,178 1200,183 1203,196 1206,189 1209,189 1212,186 1215,183 1218,186
1221,180 1224,174 1227,178 1230,162 1233,161 1236,181 1239,178 1242,181 1245,181 1251,183 1254,190
1257,175 1260,180 1263,185 1266,183 1269,187 1272,184 1275,190 1278,191 1281,201 1284,184 1287,179
1290,179 1296,183 1299,181 1302,195 1305,192 1308,184 1311,161 1314,167 1317,165 1320,169 1323,178
1326,189 1329,192 1332,187 1335,189 1338,200 1341,198 1344,207 1350,206 1353,198 1356,204 1359,212
1362,211 1365,216 1368,209 1371,210 1374,207 1380,200 1383,195 1386,195 1389,191 1392,201 1395,205
1398,213 1401,209 1404,206 1407,198 1410,203 1413,198 1416,189 1419,206 1422,212 1425,222 1428,227
1431,225 1434,214 1437,216 1440,213 1443,213 1446,219 1449,212 1452,204 1455,206 1458,204 1461,198
1464,199 1467,202 1470,197 1473,178 1476,187 1479,188 1482,185 1485,181 1488,181 1491,194 1494,193
1497,186 1500,187 1503,192 1506,189 1509,195 1512,201 1515,201 1518,199 1521,203 1524,200 1527,187
1530,190 1533,188 1539,186 1542,183 1545,189 1548,194 1551,198 1554,128 1557,146 1560,149 1563,183
1566,198 1569,198 1572,178 1575,177 1578,173 1581,183 1584,226 1587,223 1590,231 1593,235 1596,241
1599,247 1602,248 1605,243 1608,220 1611,215 1614,217 1617,232 1620,225 1623,234 1626,219 1629,202
1632,205 1635,218 1638,227 1641,229 1644,223 1647,227 1650,216 1653,198 1656,184 1659,194 1662,198
1665,212 1668,207 1671,204 1674,196 1677,195 1680,177 1683,180 1686,174 1689,173 1692,175 1695,186
1698,204 1701,194 1704,206 1707,204 1710,194 1713,196 1716,191 1719,183 1722,197 1725,210 1728,207
1731,205 1734,198 1737,192 1740,192 1743,157 1746,178 1749,186 1752,189 1755,186 1758,178`);

const dmiPlus = points(`
3,904 8,905 12,910 15,850 18,847 21,850 28,850 31,853 37,829 41,842 46,848 51,849 58,833 61,834 66,845 70,823
73,827 78,821 85,828 91,842 96,850 102,863 105,871 109,865 115,862 120,871 124,861 127,870 133,861 142,858
145,852 148,857 151,853 156,867 162,873 169,883 175,860 178,867 181,859 189,872 193,866 197,877 202,882
205,895 208,901 214,888 218,894 228,903 231,918 235,913 239,920 247,927 249,917 255,927 258,917 268,938
271,923 276,929 279,912 282,902 288,917 291,898 294,893 299,894 304,901 307,897 315,913 322,923 328,915
331,921 334,920 337,907 340,920 343,922 346,921 352,924 355,882 358,876 363,887 367,895 370,891 374,893
380,905 386,922 391,928 393,917 397,910 400,915 404,914 409,919 413,927 418,932 421,893 424,888 430,873
435,882 438,874 445,882 448,871 452,877 456,878 459,857 463,835 467,844 472,851 475,813 478,798 481,794
487,796 490,800 495,800 498,805 502,784 507,793 514,780 519,783 525,792 528,774 534,782 539,788 544,793
548,803 553,807 557,820 563,828 569,838 574,846 577,840 581,845 586,858 592,846 595,844 598,836 601,813
607,827 610,817 613,823 615,812 622,818 625,815 629,819 634,817 637,827 646,843 649,828 653,833 658,843
661,833 664,807 667,798 671,804 675,809 679,798 682,805 688,788 691,765 694,767 699,777 703,770 706,733
709,743 712,728 715,735 718,712 723,726 729,727 735,740 739,737 742,742 745,740 749,747 755,753 759,758
764,770 769,778 772,762 775,761 778,755 784,762 788,770 793,777 796,773 799,727 802,731 807,733 813,737
817,730 822,734 825,747 832,756 841,770 844,768 850,778 853,758 855,756 860,765 868,775 874,790 880,795
889,808 895,795 898,807 901,807 910,822 912,818 916,821 921,821 928,805 931,805 936,822 940,807 947,806
952,793 957,807 960,820 965,829 969,833 975,834 979,838 981,824 984,814 988,777 991,763 994,767 997,780
1001,769 1005,775 1008,764 1011,771 1015,757 1018,764 1021,746 1024,749 1027,748 1031,762 1039,779
1045,763 1050,771 1056,777 1062,767 1071,787 1075,787 1083,793 1087,779 1090,785 1095,786 1102,798
1108,808 1112,803 1116,790 1119,780 1123,756 1125,761 1128,759 1135,744 1138,727 1141,725 1144,717
1150,740 1156,757 1164,770 1171,787 1174,773 1176,782 1180,769 1188,789 1192,763 1198,743 1202,750
1206,764 1212,772 1218,763 1221,770 1225,759 1228,766 1231,750 1234,752 1237,764 1242,770 1245,752
1249,760 1255,768 1258,759 1261,768 1266,774 1269,773 1274,779 1277,779 1281,789 1285,728 1288,738
1291,719 1300,738 1305,773 1309,750 1311,731 1315,739 1318,739 1323,749 1329,769 1335,773 1338,788
1347,800 1351,798 1362,820 1365,811 1369,821 1374,827 1380,817 1386,825 1392,811 1396,820 1402,828
1408,809 1411,816 1416,807 1420,822 1428,837 1432,837 1435,823 1441,828 1444,821 1450,837 1453,832
1459,838 1465,821 1471,827 1474,796 1477,807 1482,811 1486,807 1488,799 1495,813 1498,812 1501,797
1506,803 1512,818 1518,826 1524,831 1528,807 1534,815 1537,813 1542,813 1548,822 1552,829 1555,722
1558,735 1561,743 1564,768 1569,787 1572,765 1575,756 1579,762 1582,770 1585,792 1589,802 1594,808
1597,807 1605,823 1608,778 1615,790 1624,812 1630,784 1633,783 1636,800 1641,812 1645,818 1648,817
1651,812 1657,772 1660,779 1665,805 1672,814 1678,800 1681,784 1686,784 1689,778 1695,795 1701,813
1707,826 1711,812 1713,817 1720,802 1726,818 1733,828 1736,833 1741,833 1744,787 1748,802 1753,809 1758,809`);

const dmiMinus = points(`
3,776 7,787 12,793 16,816 21,824 28,830 31,830 35,838 40,844 43,836 48,845 55,852 61,859 65,844 70,854 73,862
78,865 81,853 85,852 88,832 93,835 96,830 99,831 102,807 106,814 115,828 120,806 124,820 126,821 132,831
142,843 150,858 156,867 160,859 163,862 168,843 175,855 179,861 184,872 187,848 190,848 193,853 196,836
201,839 205,784 208,788 214,799 219,791 225,787 228,792 231,736 235,747 239,754 244,759 246,757 249,764
253,758 255,762 259,777 265,781 268,789 273,796 276,792 282,803 288,787 293,797 298,803 300,803 303,792
309,805 312,777 315,771 321,776 327,785 331,770 336,783 339,741 347,759 352,768 356,786 360,787 366,792
373,807 375,807 378,786 382,792 387,788 394,804 402,810 406,806 409,809 412,793 415,798 418,799 421,815
426,824 432,829 435,819 440,828 445,833 448,844 454,846 459,853 464,867 469,868 473,876 475,888 479,894
487,902 489,897 495,906 498,899 501,904 505,902 511,909 518,921 525,923 532,931 536,929 541,929 544,931
546,922 550,911 553,913 555,901 558,905 562,907 567,887 571,874 574,880 579,884 582,867 585,853 589,862
595,868 601,880 607,868 612,882 618,887 625,891 629,891 634,897 637,870 642,869 645,864 649,871 655,877
658,857 664,870 671,879 677,882 682,889 689,898 693,908 698,909 702,913 706,927 712,937 715,934 719,949
724,954 729,958 734,951 739,954 742,950 746,957 754,963 757,956 760,958 764,937 769,920 775,937 784,942
789,936 796,941 799,951 804,954 810,957 816,962 822,967 825,938 830,931 834,918 838,920 841,906 844,908
849,898 855,910 862,916 865,902 868,903 871,884 876,895 882,907 885,894 895,905 898,891 904,889 911,901
919,908 925,914 931,918 936,884 943,892 952,901 957,888 960,862 963,862 967,867 975,872 979,870 984,879
988,892 993,899 997,872 1002,879 1005,874 1011,887 1015,898 1020,908 1026,913 1031,925 1035,927 1038,917
1042,926 1051,933 1056,930 1062,937 1068,934 1071,926 1076,932 1083,930 1087,940 1093,948 1098,957
1105,948 1110,954 1118,963 1123,972 1130,976 1144,988 1147,963 1150,943 1154,947 1159,946 1163,923
1167,911 1171,910 1174,915 1177,905 1182,917 1185,897 1189,897 1194,914 1201,925 1204,908 1209,918
1219,924 1222,922 1225,926 1228,921 1234,931 1237,903 1240,906 1242,902 1245,908 1248,892 1252,894
1255,887 1261,904 1267,904 1272,910 1276,913 1281,898 1285,921 1288,905 1291,912 1296,911 1300,907
1302,893 1305,864 1310,874 1313,885 1318,892 1324,879 1326,863 1329,852 1335,861 1338,824 1344,834
1348,832 1357,847 1360,840 1365,854 1374,863 1380,872 1384,872 1389,879 1392,890 1395,867 1402,875
1408,883 1411,880 1416,887 1420,856 1422,860 1426,843 1432,838 1438,847 1441,842 1444,846 1447,839
1452,850 1459,855 1465,863 1471,858 1474,872 1477,878 1482,879 1488,889 1492,872 1495,872 1501,883
1504,874 1507,877 1510,862 1513,863 1518,870 1522,869 1524,868 1528,877 1534,881 1543,887 1547,881
1552,853 1555,888 1558,899 1561,892 1563,847 1566,823 1569,822 1573,833 1578,839 1582,832 1585,773
1587,767 1591,779 1593,774 1597,783 1603,768 1606,773 1608,792 1615,802 1618,791 1621,791 1624,802
1629,815 1632,821 1635,776 1641,783 1648,792 1652,808 1657,819 1660,823 1662,816 1665,787 1675,801
1680,812 1687,820 1689,833 1695,843 1699,823 1702,830 1705,829 1710,842 1716,852 1720,858 1722,855
1725,836 1732,850 1738,859 1741,861 1744,874 1750,863 1758,872`);

// Grid
let days = '';
let weeks = '';
for (let k = 0; k <= 65; k++) {
    const x = 15.5 + k * DAY;
    if (k % 5 === 0) {
        weeks += `M${x} 114V692`;
    } else {
        days += `M${x} 90V692`;
    }
    if (k < 65) {
        days += `M${x} 714V988`;
    }
}

// Histogram
let bars = '';
for (let x = 3; x <= 1758; x += BAR) {
    bars += `M${x} ${ZERO}V${Math.round(valueAt(histogram, x))}`;
}
draw(plot, 'path', { class: 'line histogram', d: bars });
draw(plot, 'path', { class: 'line grid-day', d: days });
draw(plot, 'rect', { x: 2, y: 90, width: 1851, height: 18, fill: '#040507' });
draw(plot, 'path', { class: 'line grid-week', d: weeks });
draw(plot, 'path', { class: 'line zero', d: 'M3 396H1760' });
draw(plot, 'path', { class: 'line level-line', d: 'M2 229.5H1852M2 428.5H1852' });
draw(plot, 'text', { class: 'level', x: 1757, y: 225 }, '30325.000');
draw(plot, 'text', { class: 'level', x: 1757, y: 424 }, '28990.000');

// 138 px cycle
draw(plot, 'path', { class: 'line cycle', d: 'M7 650A69 43 0 0 1 60 691' });
for (let x = 60; x < 1700; x += 138) {
    draw(plot, 'path', { class: 'line cycle', d: `M${x} 691A69 42 0 0 1 ${x + 138} 691` });
}
draw(plot, 'path', { class: 'line cycle', d: 'M1716 691A69 42 0 0 1 1851 682' });

// Series
draw(plot, 'path', { class: 'line signal', d: smooth(signal) });
draw(plot, 'path', { class: 'line macd', d: smooth(macd) });
draw(plot, 'polyline', { class: 'line price', points: price.join(' ') });
let dots = '';
for (let x = 3; x <= 1758; x += BAR) {
    dots += `M${x - 1} ${Math.round(valueAt(price, x)) - 2}h3v4h-3z`;
}
draw(plot, 'path', { class: 'dots', d: dots });
draw(plot, 'polyline', { class: 'line plus', points: dmiPlus.join(' ') });
draw(plot, 'polyline', { class: 'line minus', points: dmiMinus.join(' ') });

// Freehand marks
const marks = [
    '736,386 742,387 749,394 751,402 750,421 747,425 736,424 725,418 720,412 722,402 730,399 747,399',
    '866,412 869,414 884,414 891,417 894,425 894,444 890,471 886,472 877,465 866,459 859,446 860,425 867,413',
    '969,386 971,387 1018,391 1010,380 996,397 993,393 998,379 1004,366 1007,365 1009,381',
    '1010,368 1010,383 1007,397 1004,412 1001,429 1001,457',
    '1014,436 1011,437 1002,450 995,460 997,471 1006,481 1012,484 1020,484 1020,465 1010,452 1014,437',
    '1621,373 1614,372 1612,369 1622,368 1637,369 1637,379 1631,397 1623,403 1608,397 1599,385 1602,376 1610,371',
    '1764,363 1765,382 1759,392 1743,388 1735,379 1734,364 1737,354 1743,350 1761,351 1773,358 1780,345 1790,338 1799,336 1814,341 1824,354 1832,377 1837,406 1844,421 1850,444 1855,471 1861,496 1864,515'
];
marks.forEach((m) => draw(plot, 'polyline', { class: 'line pen', points: m }));

// Price and DMI axes
draw(axis, 'path', { class: 'line axis', d: 'M1853.5 90V990M1853 693.5H1918' });
for (let p = 31000; p >= 27500; p -= 500) {
    const y = Math.round(128 + (31000 - p) * 0.1493);
    draw(axis, 'path', { class: 'line axis', d: `M1854 ${y - 0.5}h6` });
    draw(axis, 'text', { x: 1861, y: y + 7 }, String(p));
}
for (let v = 30; v >= 16; v -= 2) {
    const y = Math.round(762 + (28 - v) * 16.42);
    draw(axis, 'path', { class: 'line axis', d: `M1854 ${y + 0.5}h6` });
    if (v % 4 === 0) {
        draw(axis, 'text', { x: 1861, y: y + 8 }, v.toFixed(2));
    }
}
[[168, '#6a6aff', '30670'], [800, '#00ff00', '25.10'], [863, '#ff00ff', '21.29']].forEach(([y, color, text]) => {
    draw(axis, 'rect', { x: 1854, y: y, width: 64, height: 23, fill: color });
    draw(axis, 'text', { class: 'badge', x: 1862, y: y + 19 }, text);
});

// Dates
const dates = ['10/18', '10/23', '10/25', '10/30', '11/01', '11/06', '11/08', '11/13', '11/16', '11/20', '11/23',
    '11/27', '11/30', '12/04', '12/07', '12/11', '12/14', '12/19', '12/21', '12/28', '1/02', '1/05', '1/09', '1/12'];
let ticks = 'M2 990.5H1918M54.5 990v5M69.5 990v11M1848.5 990v5';
draw(time, 'text', { x: 70, y: 1014 }, '10/12');
draw(time, 'text', { x: 124, y: 1014 }, '10/16');
dates.forEach((date, i) => {
    const x = 192 + i * 69;
    ticks += `M${x + 0.5} 990v5`;
    draw(time, 'text', { x: date.length < 5 ? x + 7 : x + 1, y: 1014 }, date);
});
draw(time, 'path', { class: 'line axis', d: ticks });
```
